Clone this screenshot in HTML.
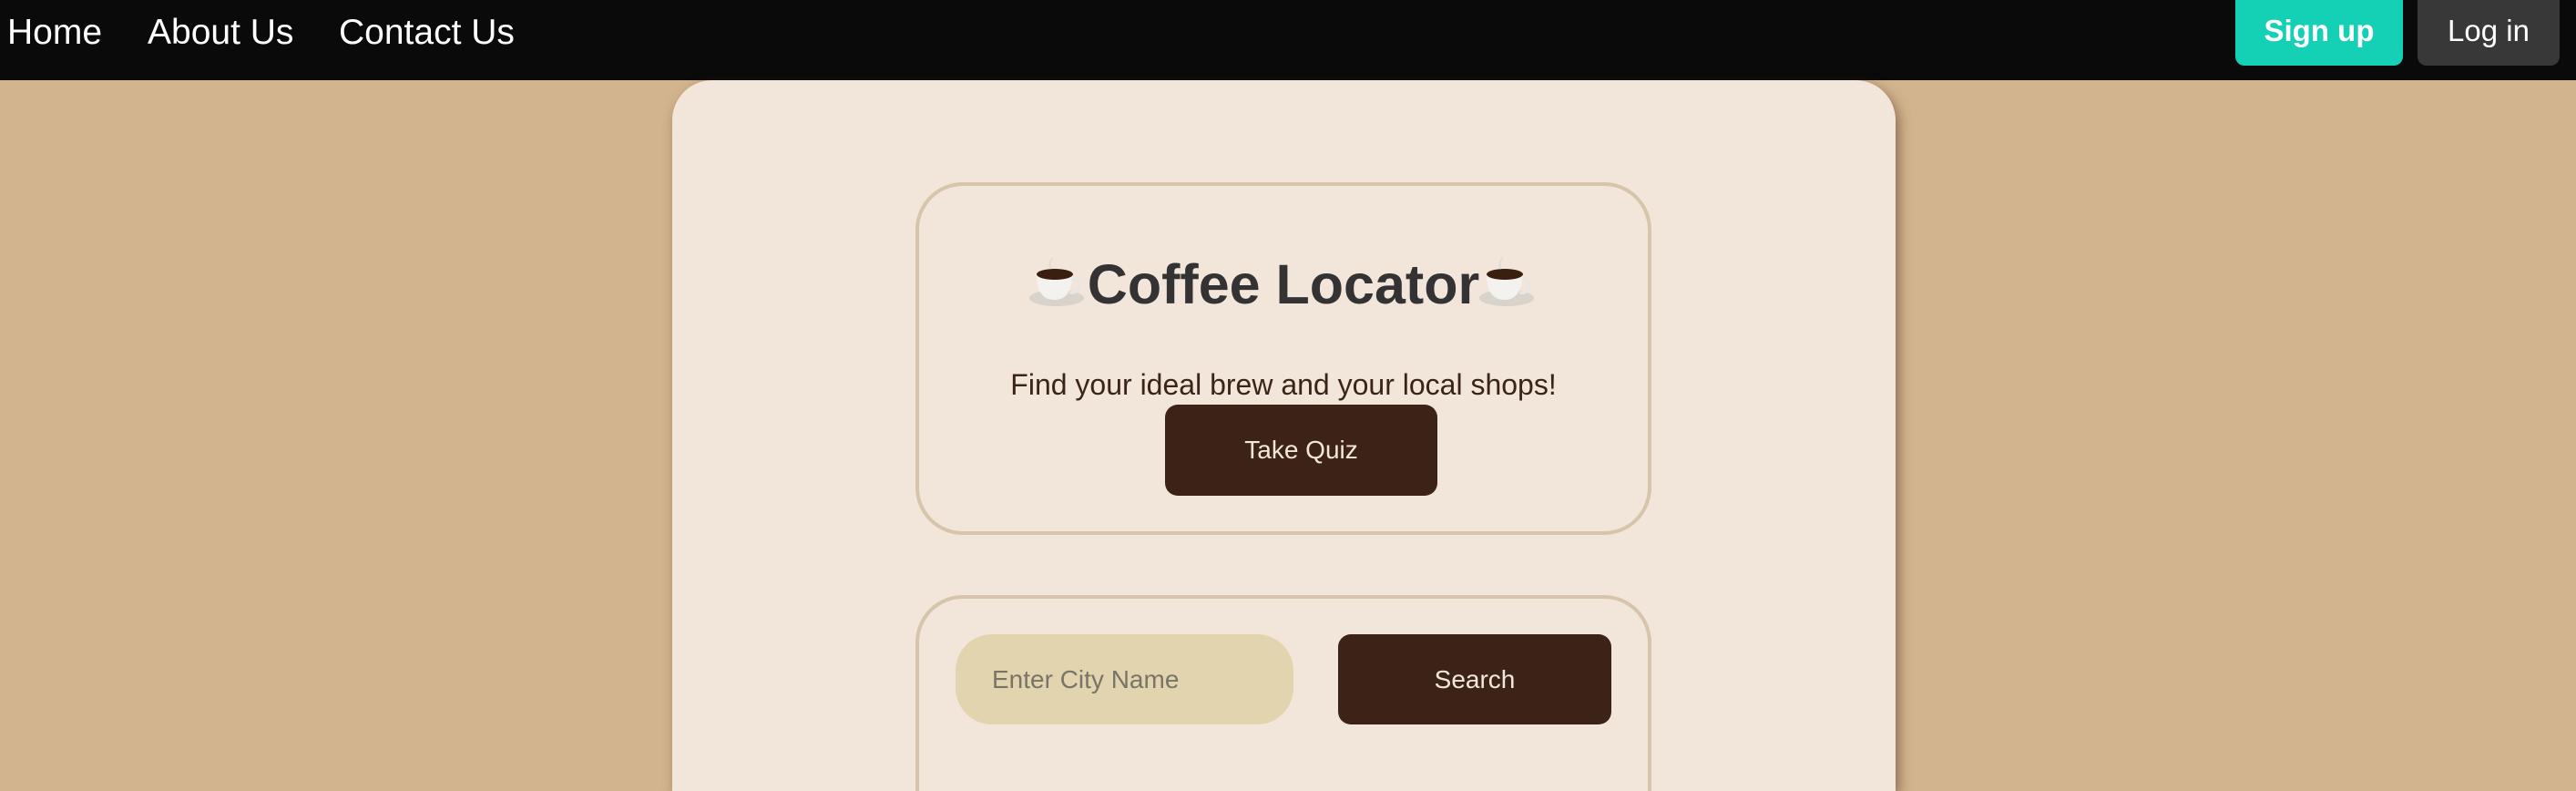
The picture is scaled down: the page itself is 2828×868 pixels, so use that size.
<!DOCTYPE html>
<html><head><meta charset="utf-8"><style>
*{margin:0;padding:0;box-sizing:border-box}
html,body{width:2828px;height:868px;overflow:hidden}
body{background:#d2b48e;font-family:"Liberation Sans",sans-serif}
#w{position:relative;width:2828px;height:868px;overflow:hidden}
.nav{position:absolute;left:0;top:0;width:2828px;height:88px;background:#0a0a0a}
.nl{position:absolute;top:11px;color:#fff;font-size:39px;line-height:50px}
.btn{position:absolute;top:0;height:72px;border-radius:0 0 10px 10px;color:#fff;font-size:33px;line-height:68px;text-align:center}
.card{position:absolute;left:738px;top:88px;width:1343px;height:780px;background:#f2e6da;border-radius:44px 44px 0 0;box-shadow:4px 6px 14px rgba(80,55,30,.55)}
.box{position:absolute;left:1005px;width:808px;border:4px solid #d6c5aa;border-radius:52px}
.title{position:absolute;left:1005px;width:808px;top:272px;text-align:center;font-size:61px;font-weight:bold;color:#333;line-height:80px}
.sub{position:absolute;left:1005px;width:808px;top:400px;text-align:center;font-size:32px;color:#3a2418;line-height:44px}
.dk{position:absolute;background:#3d2317;color:#f2e6da;border-radius:14px;font-size:28px;text-align:center}
svg{vertical-align:-6px}
</style></head><body><div id="w">
<div class="nav">
<span class="nl" style="left:8px">Home</span>
<span class="nl" style="left:162px">About Us</span>
<span class="nl" style="left:372px">Contact Us</span>
<div class="btn" style="left:2454px;width:184px;background:#14d0b4;font-weight:bold">Sign up</div>
<div class="btn" style="left:2654px;width:156px;background:#383838">Log in</div>
</div>
<div class="card"></div>
<div class="box" style="top:200px;height:387px"></div>
<div class="title"><svg width="64" height="58" viewBox="0 0 64 58"><ellipse cx="30" cy="46" rx="30" ry="9" fill="#d8d4cc"/><path d="M8 20 Q8 48 28 48 Q46 48 48 20Z" fill="#f4f2ee"/><path d="M46 26 q12 -2 8 10 q-4 6 -10 4" fill="none" stroke="#e8e6e0" stroke-width="3"/><ellipse cx="28" cy="20" rx="20" ry="6" fill="#3a1e10"/><path d="M24 14 q-4 -6 2 -12" stroke="#ddd" fill="none" stroke-width="2"/></svg>Coffee Locator<svg width="64" height="58" viewBox="0 0 64 58"><ellipse cx="30" cy="46" rx="30" ry="9" fill="#d8d4cc"/><path d="M8 20 Q8 48 28 48 Q46 48 48 20Z" fill="#f4f2ee"/><path d="M46 26 q12 -2 8 10 q-4 6 -10 4" fill="none" stroke="#e8e6e0" stroke-width="3"/><ellipse cx="28" cy="20" rx="20" ry="6" fill="#3a1e10"/><path d="M24 14 q-4 -6 2 -12" stroke="#ddd" fill="none" stroke-width="2"/></svg></div>
<div class="sub">Find your ideal brew and your local shops!</div>
<div class="dk" style="left:1279px;top:444px;width:299px;height:100px;line-height:100px">Take Quiz</div>
<div class="box" style="top:653px;height:215px;border-bottom:none;border-radius:52px 52px 0 0"></div>
<div style="position:absolute;left:1049px;top:696px;width:371px;height:99px;background:#e3d4b0;border-radius:40px;color:#7a7468;font-size:28px;line-height:99px;padding-left:40px">Enter City Name</div>
<div class="dk" style="left:1469px;top:696px;width:300px;height:99px;line-height:99px">Search</div>
</div></body></html>
